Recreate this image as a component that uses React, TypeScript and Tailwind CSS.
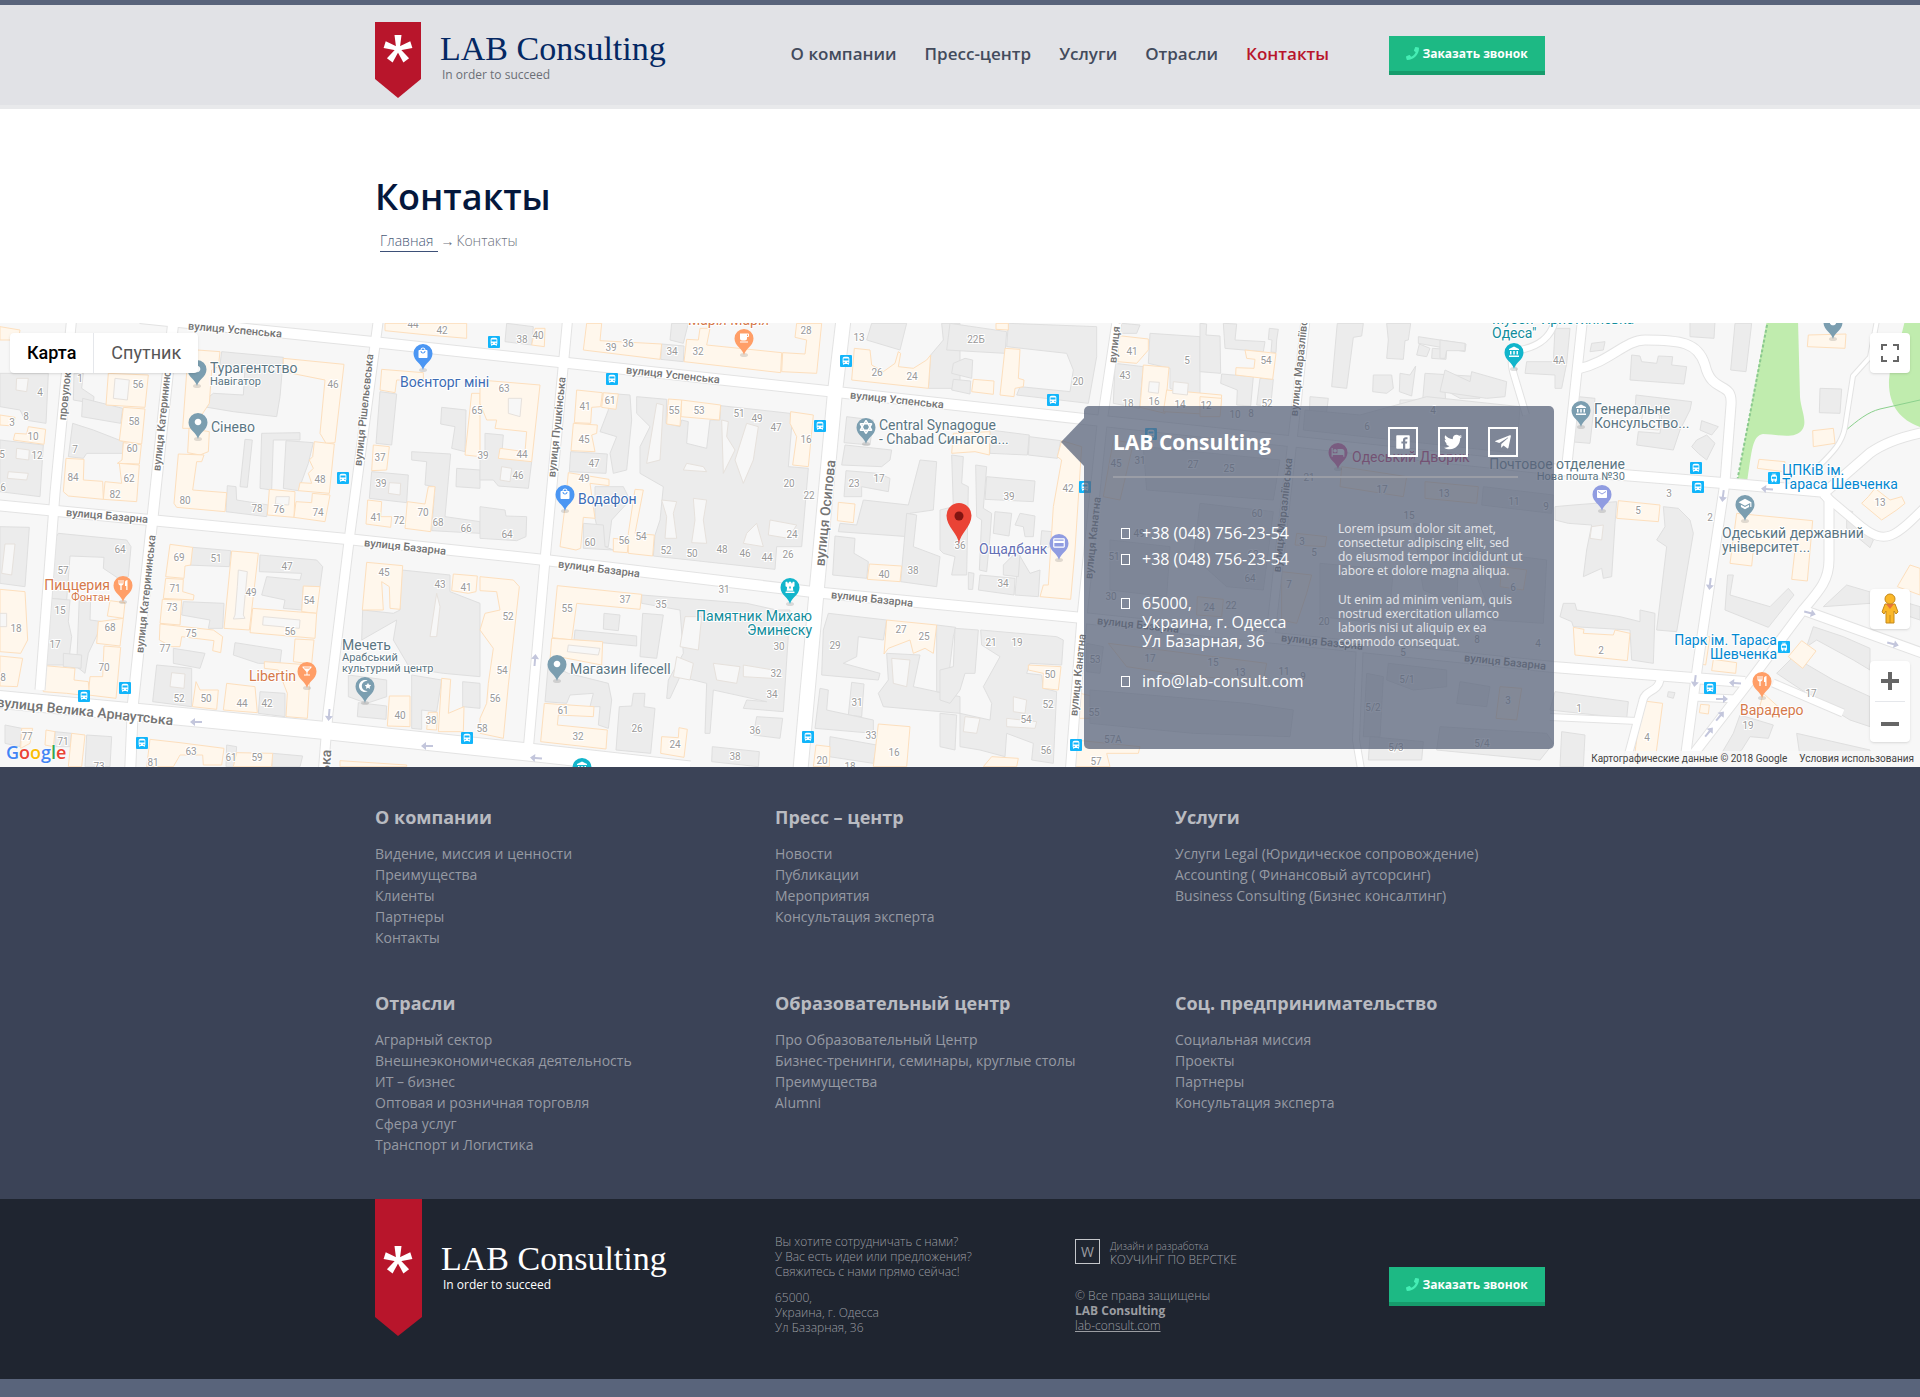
import { useState, type ReactNode } from "react";
import type { IconType } from "react-icons";
import {
  FaChessRook,
  FaPhone,
  FaStarAndCrescent,
  FaStarOfDavid,
  FaTelegramPlane,
  FaTwitter,
} from "react-icons/fa";
import { IoLogoFacebook } from "react-icons/io";
import {
  MdAccountBalance,
  MdCircle,
  MdCreditCard,
  MdDirectionsBus,
  MdEmail,
  MdHotel,
  MdLocalBar,
  MdLocalCafe,
  MdLocalMall,
  MdRestaurant,
  MdSchool,
  MdTram,
} from "react-icons/md";

const navLinks = ["О компании", "Пресс-центр", "Услуги", "Отрасли", "Контакты"];

const footerColumns = [
  {
    title: "О компании",
    links: ["Видение, миссия и ценности", "Преимущества", "Клиенты", "Партнеры", "Контакты"],
  },
  {
    title: "Пресс – центр",
    links: ["Новости", "Публикации", "Мероприятия", "Консультация эксперта"],
  },
  {
    title: "Услуги",
    links: [
      "Услуги Legal (Юридическое сопровождение)",
      "Accounting ( Финансовый аутсорсинг)",
      "Business Consulting (Бизнес консалтинг)",
    ],
  },
  {
    title: "Отрасли",
    links: [
      "Аграрный сектор",
      "Внешнеэкономическая деятельность",
      "ИТ – бизнес",
      "Оптовая и розничная торговля",
      "Сфера услуг",
      "Транспорт и Логистика",
    ],
  },
  {
    title: "Образовательный центр",
    links: [
      "Про Образовательный Центр",
      "Бизнес-тренинги, семинары, круглые столы",
      "Преимущества",
      "Alumni",
    ],
  },
  {
    title: "Соц. предпринимательство",
    links: ["Социальная миссия", "Проекты", "Партнеры", "Консультация эксперта"],
  },
];

// ---------- map data ----------

type Tile = {
  x: number;
  y: number;
  gray: string[];
  beige: string[];
  yards: string[];
  numbers: [number, number, string][];
};

// every tile is drawn three times larger than it is shown
const tiles: Tile[] = [
  {
    x: 0,
    y: 320,
    gray: [
      "0,160 145,160 138,310 75,300 60,270 0,260",
      "0,360 130,375 120,530 0,515",
      "222,160 250,160 245,205 282,230 280,250 220,240",
      "248,235 368,265 362,310 245,290",
      "218,310 280,330 370,365 368,400 260,400 250,415 205,410",
      "665,95 850,112 840,230 830,290 700,275 610,260 615,240 640,220 730,225 735,145 660,135",
      "735,358 757,360 742,502 720,500",
      "785,340 900,338 900,360 820,360 815,510 780,505",
      "858,362 940,368 925,430 895,512 850,505",
      "682,497 708,500 710,540 805,555 800,590 678,575",
      "1140,215 1190,222 1175,375 1128,370",
      "1115,455 1225,465 1220,548 1108,535",
      "1235,395 1352,402 1335,590 1440,605 1440,640 1295,632 1305,500 1275,495 1280,425 1235,420",
      "1325,262 1398,270 1395,395 1355,385 1365,320 1322,312",
      "1370,445 1440,450 1440,505 1368,500",
      "175,640 380,660 393,680 385,770 355,775 310,745 312,712 210,708 200,840 155,835 163,660",
      "150,835 210,840 205,905 215,950 205,1035 135,1035",
      "238,830 272,835 270,900 310,905 265,1000 255,1060 230,1040",
      "190,1000 245,1005 243,1045 190,1040",
      "0,620 88,622 75,800 0,790",
      "578,682 692,692 688,740 560,735",
      "780,705 950,720 968,740 960,800 910,800 905,870 850,865 855,840 785,825 800,770 900,780 905,760 778,755",
      "550,845 672,850 668,925 625,925 630,900 545,885",
      "705,968 845,990 840,1030 775,1030 700,1005",
      "470,1035 575,1045 575,1160 458,1145",
      "520,985 615,1000 600,1045 520,1030",
      "780,1115 855,1120 855,1190 775,1180",
      "1205,750 1350,765 1350,815 1440,850 1440,1070 1330,1060 1230,1045 1180,960 1190,900 1085,960 1088,870 1180,880 1200,870",
      "1045,1065 1160,1080 1160,1130 1100,1150 1045,1130",
      "1075,1148 1160,1158 1158,1198 1072,1190",
      "1235,1065 1325,1080 1310,1175 1265,1170 1265,1228 1235,1225",
      "1388,1085 1440,1090 1440,1165 1388,1160",
      "680,1275 710,1280 705,1340 678,1340",
      "818,1300 908,1308 900,1340 815,1340",
      "260,1245 335,1250 330,1340 255,1340",
      "15,1215 65,1225 60,1280 15,1270",
      "165,1235 215,1240 210,1280 165,1280",
    ],
    beige: [
      "0,20 60,30 55,60 0,60",
      "325,160 445,165 435,262 318,255",
      "370,262 435,267 425,372 358,362",
      "370,368 424,374 418,432 352,430 366,420",
      "358,430 418,435 410,545 310,538 315,485 365,490",
      "198,415 252,418 250,480 308,484 310,538 205,528 190,515",
      "85,320 137,328 132,373 40,360 45,340 80,342",
      "0,285 45,292 40,318 0,315",
      "565,88 660,95 655,140 635,150 628,250 605,285 600,325 548,325",
      "567,325 628,335 625,395 600,405 563,398",
      "535,402 612,405 605,425 590,425 578,510 680,518 675,575 530,562 522,550",
      "850,115 1032,133 1005,368 978,370 960,340 975,180 850,155",
      "943,365 1003,372 988,520 895,512 900,488 935,490 925,460 940,445 928,420 938,410",
      "808,508 885,515 882,592 802,585",
      "888,545 935,548 937,520 990,525 975,605 882,592",
      "1145,148 1270,158 1270,180 1190,180 1185,218 1140,210",
      "1120,375 1168,380 1160,450 1115,452",
      "1103,540 1145,545 1142,590 1175,590 1172,622 1098,612",
      "1222,545 1275,552 1285,500 1305,500 1292,635 1215,625",
      "1155,10 1400,10 1400,55 1283,45 1155,32",
      "1415,220 1440,220 1440,410 1395,405",
      "510,673 578,682 572,735 555,738 552,775 497,770",
      "497,775 550,778 548,815 582,825 580,840 490,835",
      "487,838 545,840 540,915 480,910",
      "480,912 640,930 668,950 662,998 638,992 642,962 545,950 540,980 515,980 478,960",
      "695,693 775,700 748,930 672,925",
      "910,798 960,800 950,880 905,875",
      "758,865 950,880 945,955 750,938",
      "885,957 942,960 935,1032 880,1025",
      "793,1025 932,1035 922,1195 858,1190 862,1120 835,1050 793,1045",
      "680,1090 765,1100 772,1178 670,1170",
      "588,1085 600,1110 655,1110 650,1168 577,1160",
      "1100,727 1208,737 1200,868 1170,865 1168,800 1145,785 1150,870 1087,870",
      "1360,762 1432,768 1428,815 1405,820 1355,812",
      "330,842 375,848 370,895 322,888",
      "295,905 370,895 360,978 290,970",
      "312,978 362,982 348,1135 265,1125 270,1070 308,1070",
      "135,1037 225,1045 222,1080 265,1085 268,1128 200,1120 130,1115 128,1085",
      "0,808 75,815 83,960 62,1000 0,995",
      "0,1008 68,1015 52,1100 0,1098",
      "1168,1128 1230,1128 1230,1220 1162,1218",
      "1285,1177 1312,1177 1310,1230 1280,1228",
      "1325,1075 1352,1078 1345,1180 1392,1160 1390,1235 1315,1235",
      "65,1225 98,1225 90,1270 62,1285",
      "138,1230 165,1235 160,1280 135,1275",
      "215,1240 255,1245 245,1340 205,1340",
      "450,1258 540,1268 672,1285 665,1335 610,1335 608,1305 540,1305 520,1340 440,1340",
      "710,1298 818,1300 815,1340 700,1340",
      "1020,1322 1220,1335 1220,1340 1020,1340",
    ],
    yards: [
      "345,175 388,180 382,240 340,235",
      "25,455 85,460 80,480 22,475",
      "50,385 88,390 86,420 48,415",
      "50,175 85,175 80,215 48,210",
      "828,530 868,530 866,555 826,552",
      "1168,488 1202,490 1200,525 1165,520",
      "15,672 45,672 35,765 5,760",
      "715,750 742,755 730,885 735,895 700,897 705,885 712,800",
      "790,890 900,900 898,925 788,915",
      "515,1058 555,1062 552,1105 510,1100",
      "1310,820 1320,860 1310,950 1290,950",
      "0,880 20,880 20,920 0,920",
    ],
    numbers: [
      [120, 215, "4"], [239, 175, "1"], [413, 191, "56"], [77, 288, "8"], [35, 306, "3"], [98, 348, "10"],
      [7, 402, "5"], [110, 405, "12"], [10, 501, "6"], [224, 387, "7"], [401, 303, "58"], [395, 385, "60"],
      [386, 474, "62"], [220, 471, "84"], [346, 522, "82"], [556, 540, "80"], [772, 564, "78"], [838, 567, "76"],
      [955, 576, "74"], [961, 477, "48"], [1000, 192, "46"], [1141, 411, "37"], [1144, 489, "39"], [1128, 592, "41"],
      [1198, 601, "72"], [1270, 576, "70"], [1315, 606, "68"], [1397, 624, "66"], [1432, 270, "65"], [1327, 31, "42"],
      [1240, 12, "44"], [359, 687, "64"], [190, 750, "57"], [180, 870, "15"], [47, 924, "18"], [164, 973, "17"],
      [331, 921, "68"], [313, 1041, "70"], [8, 1072, "8"], [538, 711, "69"], [648, 714, "51"], [862, 739, "47"],
      [525, 804, "71"], [752, 816, "49"], [926, 840, "54"], [515, 861, "73"], [572, 939, "75"], [869, 933, "56"],
      [496, 984, "77"], [538, 1134, "52"], [617, 1134, "50"], [725, 1149, "44"], [802, 1149, "42"], [1151, 757, "45"],
      [1319, 791, "43"], [1398, 800, "41"], [1201, 1185, "40"], [1294, 1200, "38"], [82, 1248, "77"], [188, 1263, "71"],
      [298, 1338, "73"], [459, 1326, "81"], [574, 1293, "63"], [693, 1311, "61"], [772, 1311, "59"],
    ],
  },
  {
    x: 480,
    y: 320,
    gray: [
      "80,10 160,20 155,75 75,65",
      "545,72 612,78 610,125 542,118",
      "575,10 625,10 610,70 570,60",
      "1175,10 1280,10 1260,90 1160,60",
      "1385,10 1440,10 1440,205 1345,205 1352,105 1390,60",
      "15,340 70,345 65,410 155,425 145,505 55,498 40,480 0,480 0,410 15,400",
      "0,560 75,570 78,588 140,590 138,650 110,662 0,655",
      "272,395 382,402 378,460 268,455",
      "385,220 450,225 455,300 440,450 400,460 390,400 410,350 360,335 385,270",
      "345,500 430,500 450,540 395,600 385,680 365,680 345,595",
      "470,230 560,238 558,310 600,320 605,300 625,305 620,370 680,385 690,300 720,300 722,257 930,280 935,320 925,440 985,445 965,680 890,680 885,748 520,708 525,645 540,600 550,500 480,460 480,380 510,320 470,280",
      "310,610 370,615 375,680 400,690 310,685",
      "372,880 420,885 415,932 370,927",
      "285,930 470,948 470,978 282,960",
      "488,880 550,885 530,1015 480,1010",
      "485,825 800,850 890,870 930,870 910,1175 790,1165 800,1140 860,1145 700,1110 690,1240 675,1240 680,1090 600,1070 570,1135 560,1135 565,1080 610,1000 600,870 485,850",
      "830,1190 908,1195 900,1255 820,1245",
      "697,1280 838,1295 835,1340 695,1325",
      "460,1120 495,1120 492,1160 525,1165 512,1300 408,1290 418,1160 455,1158",
      "205,1030 265,1060 385,1090 395,1140 385,1225 355,1215 360,1160 330,1160 340,1120 270,1125 260,1150 195,1145",
      "1100,290 1180,300 1170,375 1092,368",
      "1095,375 1235,390 1230,420 1205,440 1085,435",
      "1098,452 1195,460 1230,475 1225,515 1145,500 1145,530 1092,530",
      "1150,540 1285,555 1320,420 1370,425 1360,570 1290,580 1285,650 1075,635 1080,610 1130,615",
      "1280,580 1310,585 1300,680 1380,710 1370,800 1262,785",
      "1065,648 1125,655 1122,700 1165,725 1160,775 1058,765",
      "1045,880 1220,900 1210,960 1135,950 1130,1010 1090,1030 1200,1060 1195,1080 1025,1065 1030,930",
      "1115,1087 1152,1092 1145,1190 1105,1185",
      "1220,1000 1320,1005 1300,1100 1440,1130 1440,1180 1210,1160 1195,1120 1225,1080",
      "1020,1105 1045,1110 1040,1170 1180,1200 1180,1240 1005,1225",
      "1050,1250 1190,1275 1180,1330 1048,1310",
      "1370,915 1427,922 1420,950 1400,1120 1370,1115",
    ],
    beige: [
      "320,10 365,10 360,62 545,72 540,118 310,90",
      "620,58 655,60 660,25 690,25 680,75 905,98 902,158 612,125",
      "950,10 1025,10 1010,160 905,155 908,98 975,102 980,60 945,52",
      "165,25 195,25 193,80 155,75",
      "1123,85 1170,90 1175,135 1210,155 1245,130 1255,95 1262,100 1255,140 1300,145 1340,120 1352,105 1345,205 1115,180",
      "0,180 180,195 155,425 55,415 60,385 135,395 140,335 45,325 50,300 20,300 0,250",
      "290,210 367,218 362,260 335,262 332,310 283,308",
      "370,218 415,222 408,268 365,262",
      "280,310 352,315 350,340 335,345 345,395 273,392",
      "265,458 387,478 387,497 330,490 345,595 310,592 302,685 288,690 240,680 255,560",
      "565,237 605,240 600,318 560,312",
      "605,240 722,255 718,300 603,290",
      "932,275 1000,285 985,440 938,435 950,350 930,310",
      "465,508 490,510 465,640 523,645 518,708 445,700 445,640",
      "400,655 445,660 442,698 400,695",
      "1075,547 1125,552 1120,608 1072,602",
      "1168,732 1265,738 1260,785 1162,778",
      "1220,900 1370,915 1360,1000 1335,985 1300,1000 1290,960 1225,985 1212,1002",
      "1195,1212 1290,1220 1280,1340 1180,1340",
      "1008,1275 1050,1280 1048,1340 1000,1340",
      "0,770 100,780 118,800 85,1095 70,1255 0,1240 0,1195 20,1150 25,1090 40,985 0,930 15,880 60,870 50,815 0,812",
      "232,797 485,823 480,868 290,850 275,960 217,953",
      "215,955 368,965 365,1035 235,1010 210,1020",
      "193,1150 342,1160 340,1190 235,1185 232,1215 382,1230 378,1287 182,1265",
      "597,1223 622,1228 612,1312 542,1300 545,1250 595,1253",
    ],
    yards: [
      "85,235 125,235 120,290 85,280",
      "65,440 95,445 90,485 60,480",
      "620,430 670,440 680,455 610,450",
      "545,540 590,545 580,580 590,655 555,655 560,590",
      "640,535 680,540 670,600 680,670 635,668 645,600",
      "725,300 745,305 740,350 765,390 730,460",
      "800,310 835,320 820,420 790,490 765,420",
      "800,640 830,610 850,680 790,670",
      "870,600 950,615 925,655 865,645",
      "530,250 550,255 540,420 500,430",
      "615,890 665,890 655,990 600,980",
      "590,1010 640,1030 630,1080 580,1070",
      "790,1035 880,1050 875,1075 790,1070",
      "700,1030 780,1040 770,1090 710,1080",
      "265,975 360,985 355,1005 262,995",
      "1235,1015 1290,1020 1280,1100 1240,1090",
    ],
    numbers: [
      [127, 56, "38"], [175, 45, "40"], [394, 81, "39"], [445, 69, "36"], [577, 94, "34"], [655, 94, "32"],
      [978, 31, "28"], [1136, 52, "13"], [1192, 157, "26"], [1297, 168, "24"], [73, 204, "63"], [127, 403, "44"],
      [115, 465, "46"], [10, 406, "39"], [80, 642, "64"], [315, 259, "41"], [390, 240, "61"], [313, 357, "45"],
      [343, 430, "47"], [313, 474, "49"], [581, 270, "55"], [658, 270, "53"], [777, 279, "51"], [832, 294, "49"],
      [889, 321, "47"], [977, 357, "16"], [928, 489, "20"], [988, 525, "22"], [937, 643, "24"], [925, 703, "26"],
      [331, 666, "60"], [433, 660, "56"], [484, 649, "54"], [559, 690, "52"], [637, 699, "50"], [727, 687, "48"],
      [796, 699, "46"], [862, 711, "44"], [732, 808, "31"], [83, 888, "52"], [260, 864, "55"], [436, 837, "37"],
      [544, 852, "35"], [898, 978, "30"], [889, 1060, "32"], [877, 1123, "34"], [826, 1231, "36"], [766, 1308, "38"],
      [67, 1050, "54"], [46, 1134, "56"], [7, 1224, "58"], [249, 1170, "61"], [295, 1248, "32"], [472, 1224, "26"],
      [586, 1273, "24"], [1123, 490, "23"], [1198, 475, "17"], [1213, 763, "40"], [1299, 751, "38"], [1066, 976, "29"],
      [1264, 928, "27"], [1333, 948, "25"], [1131, 1147, "31"], [1173, 1245, "33"], [1243, 1297, "16"], [1027, 1320, "20"],
      [1111, 1338, "18"],
    ],
  },
  {
    x: 940,
    y: 320,
    gray: [
      "30,10 200,35 195,100 20,90",
      "205,10 470,20 470,110 445,250 230,225 240,200 390,215 400,150 380,100 200,80",
      "40,130 75,115 98,120 95,175 35,160",
      "40,178 92,183 90,222 35,210",
      "150,330 268,345 262,405 150,400",
      "268,350 362,362 352,415 265,405",
      "35,405 70,410 65,490 85,500 80,765 35,765 45,710 10,700 0,690 0,570 40,560",
      "140,470 285,483 280,545 135,538",
      "107,435 140,440 130,565 155,580 150,650 140,755 118,750 125,600 110,590",
      "165,575 215,580 207,648 160,640",
      "240,580 285,588 280,650 255,650 250,620 225,615",
      "120,765 225,775 222,825 115,810",
      "235,700 270,760 300,750 295,830 225,825",
      "190,735 225,700 240,700 235,770 190,765",
      "305,632 335,635 330,680 300,690",
      "85,757 102,760 98,808 85,808",
      "45,925 115,930 105,1060 75,1060 60,1110 30,1150 0,1140 0,1050 40,1040",
      "122,930 350,950 370,960 365,1035 270,1030 260,1060 305,1065 310,1105 350,1115 340,1330 275,1320 280,1270 200,1240 195,1310 120,1290 60,1280 60,1180 150,1200 155,1150 130,1100 180,1010 125,975",
      "0,1180 50,1185 45,1290 0,1280",
      "525,130 610,140 598,265 520,250",
      "630,40 780,50 780,240 690,205 690,145 625,130",
      "545,10 600,15 590,40 540,40",
    ],
    beige: [
      "168,10 205,10 205,30 168,28",
      "195,85 240,88 235,175 252,180 250,200 225,205 222,230 180,225",
      "100,178 162,183 160,223 95,215",
      "537,47 625,57 625,90 590,130 533,125",
      "610,135 687,142 675,280 600,262",
      "680,210 845,225 840,285 670,275",
      "40,340 150,335 148,405 105,395 35,400",
      "365,362 425,380 405,690 392,838 300,830 310,795 325,795 340,560 365,420 352,410",
      "265,1035 363,1040 355,1110 308,1105 310,1060 265,1050",
      "420,1120 485,1135 475,1195 418,1195",
      "155,1310 235,1315 230,1340 130,1340",
      "405,1260 600,1280 595,1300 500,1300 510,1340 405,1340",
    ],
    yards: [
      "628,185 658,187 655,220 625,216",
      "700,185 745,190 742,225 698,220",
      "220,1130 260,1140 255,1180 220,1175",
      "75,1190 120,1195 110,1240 70,1235",
      "200,1195 290,1205 285,1225 200,1220",
    ],
    numbers: [
      [109, 58, "22Б"], [415, 184, "20"], [575, 94, "41"], [556, 165, "43"], [740, 121, "5"], [563, 250, "18"],
      [641, 243, "16"], [719, 252, "14"], [797, 255, "12"], [385, 504, "42"], [208, 528, "39"], [61, 676, "36"],
      [190, 789, "34"], [153, 967, "21"], [232, 967, "19"], [331, 1062, "50"], [325, 1152, "52"], [259, 1197, "54"],
      [319, 1290, "56"], [469, 1323, "57"],
    ],
  },
  {
    x: 1200,
    y: 320,
    gray: [
      "0,10 20,12 18,45 60,48 62,160 0,155",
      "70,10 110,12 105,60 195,65 190,95 75,85",
      "208,25 235,28 230,60 228,98 213,96 216,60 205,58",
      "65,162 160,170 152,258 110,255 112,210 62,190",
      "180,175 220,178 212,258 170,255",
      "412,10 490,10 485,48 460,52 440,205 395,200 410,30",
      "560,10 632,10 625,60 615,62 610,118 560,115 565,60",
      "655,50 798,72 795,95 655,70",
      "658,72 690,85 680,110 650,105",
      "697,85 740,88 738,118 695,115",
      "520,165 575,165 580,205 560,220 518,215",
      "600,160 630,165 647,138 635,228 598,215",
      "675,160 840,170 840,235 780,235 735,210 740,300 600,300 600,240 668,240",
      "330,230 385,235 378,290 328,290",
    ],
    beige: ["135,90 228,100 218,178 107,165 108,143 162,145 165,118 140,115", "0,230 65,235 60,290 0,290"],
    yards: [],
    numbers: [
      [197, 121, "54"],
      [200, 249, "52"],
    ],
  },
  {
    x: 1060,
    y: 390,
    gray: [
      "250,170 660,210 640,330 260,300",
      "150,450 330,470 320,620 150,600",
      "420,340 640,365 610,600 500,590 400,500",
      "1270,290 1480,315 1475,370 1265,345",
      "735,60 900,75 1100,20 1380,50 1370,190 730,120",
      "780,520 1000,540 990,650 960,700 780,680",
      "1060,400 1200,420 1190,640 1090,600",
      "1220,480 1460,510 1450,700 1300,690",
      "80,760 130,770 120,850 80,845",
      "90,900 560,940 700,960 690,1040 400,1030 90,1000",
      "1200,875 1290,890 1280,950 1190,940",
      "985,820 1160,840 1160,890 1060,900 980,870",
      "920,850 970,860 960,1040 910,1040",
      "1140,1010 1460,1030 1480,1060 1440,1110 1130,1080",
      "930,1040 1090,1055 1085,1110 925,1110",
    ],
    beige: [
      "160,150 220,160 180,330 130,320",
      "845,230 1040,260 1030,320 840,290",
      "1095,275 1255,290 1250,340 1095,325",
      "665,545 755,555 740,610 710,700 665,690",
      "710,430 800,440 795,470 705,465",
      "1325,530 1400,540 1390,600 1320,590",
      "412,620 490,628 485,680 410,675",
      "145,760 620,820 610,870 400,860 200,830",
      "1320,890 1385,895 1370,990 1308,985",
    ],
    yards: [],
    numbers: [
      [524, 72, "10"], [572, 70, "8"], [1119, 60, "4"], [920, 109, "6"], [167, 220, "45"],
      [240, 211, "31"], [400, 222, "27"], [506, 235, "25"], [747, 262, "21"], [965, 297, "17"], [1151, 310, "13"],
      [1363, 334, "11"], [1457, 348, "9"], [590, 370, "60"], [1046, 376, "15"], [237, 430, "49"], [578, 492, "62"],
      [725, 453, "3"], [761, 487, "5"], [162, 498, "51"], [569, 565, "64"], [688, 582, "7"], [1358, 592, "6"],
      [152, 619, "30"], [446, 652, "24"], [514, 646, "22"], [793, 694, "20"], [1250, 748, "8"], [1434, 760, "4"],
      [1028, 787, "5"], [104, 807, "53"], [271, 805, "17"], [458, 816, "15"], [541, 847, "13"], [673, 844, "11"],
      [728, 858, "9"], [1042, 867, "5/1"], [1343, 931, "3"], [940, 952, "5/2"], [101, 966, "55"], [158, 1048, "57А"],
      [1007, 1072, "5/3"], [1265, 1060, "5/4"],
    ],
  },
  {
    x: 1440,
    y: 320,
    gray: [
      "0,60 75,70 75,92 20,92 15,115 0,115",
      "95,155 200,185 195,230 140,235 0,215 15,150 90,185",
      "345,25 390,25 380,130 365,205 345,205 345,165 255,160 260,125 340,125",
      "575,105 600,108 605,125 650,130 655,108 698,110 695,135 740,140 732,192 570,180",
      "885,10 935,10 918,155 872,150",
      "588,225 755,245 750,270 720,330 700,390 590,375 595,335 660,340 665,285 585,275",
      "785,302 835,320 815,345 780,330",
      "800,345 825,370 800,420 775,400 755,380 770,360",
      "1140,205 1205,207 1200,280 1138,278",
      "395,228 465,235 450,370 390,365",
      "400,555 530,545 525,610 515,770 490,775 485,745 430,770 440,690 455,615 385,610 345,600 345,560",
      "670,560 715,565 750,600 760,640 710,935 650,930 680,680 650,660 675,620",
      "370,850 405,850 410,870 540,890 600,905 600,870 645,880 640,1030 575,1020 570,930 400,920 395,905 360,890",
      "863,765 880,765 870,825 990,860 1045,805 1062,825 985,922 855,870",
      "345,1115 565,1145 560,1195 330,1170",
      "750,5 825,5 822,55 750,50",
      "455,70 495,65 490,90 450,95",
      "1120,920 1210,950 1290,985 1290,1050 1240,1020 1130,960 1100,980",
      "1220,795 1440,860 1440,900 1290,850 1150,860",
      "1010,1060 1060,1010 1180,1080 1290,1130 1290,1220 1230,1200 1100,1120",
      "900,1185 1000,1215 985,1255 930,1250 905,1290 850,1330 830,1325 880,1240",
      "1220,570 1238,575 1235,605 1300,660 1290,683 1220,625",
      "365,1235 435,1245 430,1340 360,1340",
      "685,1115 705,1118 700,1135 682,1130",
      "1070,1240 1290,1290 1290,1310 1080,1310",
    ],
    beige: [
      "1105,45 1218,42 1215,85 1102,80",
      "1118,332 1180,325 1185,370 1120,380",
      "957,418 1035,425 1032,455 952,445",
      "535,542 660,555 655,605 530,595",
      "1305,505 1350,540 1385,530 1395,550 1370,570 1325,600 1265,550 1285,530",
      "890,580 1118,602 1102,783 1055,778 1065,690 940,690 935,738 870,730",
      "400,922 432,928 430,940 520,945 525,930 570,940 562,1022 405,1005",
      "1085,962 1128,993 1088,1045 1045,1010",
      "820,1018 890,1028 887,1060 815,1052",
      "790,950 810,950 797,1035 785,1032",
      "605,1142 668,1150 645,1325 582,1320",
      "782,1153 808,1155 805,1182 778,1178",
      "970,1120 1020,1165 1010,1190 955,1175",
      "1410,735 1440,745 1440,825 1372,800",
    ],
    yards: ["455,620 490,615 485,660 450,655", "610,270 660,285 655,330 600,325"],
    numbers: [
      [357, 121, "4А"], [686, 520, "3"], [594, 571, "5"], [809, 592, "2"], [1319, 547, "13"], [482, 991, "2"],
      [416, 1164, "1"], [621, 1251, "4"], [1112, 1120, "17"], [923, 1216, "19"],
    ],
  },
];

const roads: [string, number][] = [
  ["M72,315 L55,493 L40,690", 9],
  ["M174,315 L153,513 L133,703 L130,775", 10],
  ["M379,315 L350,533 L328,713 L323,775", 9],
  ["M568,315 L545,560 L528,752", 9],
  ["M844,315 L835,392 L817,587 L800,775", 14],
  ["M1118,315 L1103,415 L1082,617 L1070,775", 9],
  ["M1306,315 L1297,400 L1270,640", 8],
  ["M1583,315 L1566,473", 9],
  ["M1578,369 C1610,362 1625,340 1645,340 C1680,340 1698,342 1705,365 C1712,395 1733,380 1731,405 L1725,482 L1698,663 L1683,775", 9],
  ["M1823,492 L1829,500 L1829,560 C1829,580 1820,590 1803,610 L1753,677 L1685,765", 9],
  ["M1823,494 L1870,453 C1885,442 1905,436 1925,432", 9],
  ["M1823,494 L1862,527 C1885,545 1895,538 1925,507", 8],
  ["M1803,610 L1925,654", 9],
  ["M1693,697 L1736,699", 7],
  ["M1773,683 L1843,713", 7],
  ["M1556,315 C1553,340 1535,347 1520,350 C1508,354 1512,368 1514,375 L1526,415", 6],
  ["M1660,680 C1658,692 1645,690 1643,700 L1623,775", 7],
  ["M1550,717 L1637,721", 6],
  ["M1878,315 L1870,357 L1853,376 L1845,427 C1842,445 1830,455 1813,472", 4],
  ["M1360,640 L1356,740 L1362,775", 6],
  ["M140,318 L373,342 L827,391 L1084,419 L1560,470 L1723,483 L1826,492", 10],
  ["M-5,505 L150,520 L347,539 L545,560 L813,592 L1083,618 L1553,667 L1693,678 L1745,682", 10],
  ["M-5,699 L187,717 L320,730 L528,752 L690,770", 17],
];

const streets: [string, number, number, number, number][] = [
  ["вулиця Успенська", 235, 330, 5, 11],
  ["вулиця Успенська", 673, 375, 6, 11],
  ["вулиця Успенська", 897, 400, 6, 11],
  ["вулиця Базарна", 107, 516, 5, 11],
  ["вулиця Базарна", 405, 547, 6, 11],
  ["вулиця Базарна", 599, 569, 7, 11],
  ["вулиця Базарна", 872, 599, 6, 11],
  ["вулиця Базарна", 1138, 625, 6, 11],
  ["вулиця Базарна", 1322, 642, 6, 11],
  ["вулиця Базарна", 1505, 662, 6, 11],
  ["вулиця Велика Арнаутська", 85, 711, 6, 14],
  ["провулок", 65, 396, -84, 11],
  ["вулиця Катерининська", 163, 412, -84, 11],
  ["вулиця Катерининська", 146, 594, -84, 11],
  ["вулиця Рішельєвська", 364, 410, -84, 11],
  ["вулиця Пушкінська", 557, 427, -84, 11],
  ["вулиця Осипова", 825, 513, -84, 14],
  ["вулиця Канатна", 1093, 538, -84, 11],
  ["вулиця Канатна", 1078, 675, -84, 11],
  ["вулиця Канатна", 1117, 322, -84, 11],
  ["вулиця Маразліївська", 1300, 359, -84, 11],
  ["вулиця Маразліївська", 1283, 515, -84, 11],
  ["Рішельєвська", 323, 796, -86, 14],
];

const slate = "#7b9eb0";
const slateText = "#5b7683";
const orange = "#ff9e67";
const orangeText = "#d5794b";
const blue = "#4b96f3";
const blueText = "#3d6cb4";
const teal = "#12b5cb";
const tealText = "#118d9c";
const indigo = "#909ce1";
const transit = "#0288d1";

type Place = {
  text: string;
  x: number;
  y: number;
  color: string;
  size?: number;
  end?: boolean;
};

const places: Place[] = [
  { text: "Турагентство", x: 210, y: 373, color: slateText },
  { text: "Навігатор", x: 210, y: 385, color: slateText, size: 11 },
  { text: "Сінево", x: 211, y: 432, color: slateText },
  { text: "Воєнторг міні", x: 400, y: 387, color: blueText },
  { text: "Водафон", x: 578, y: 504, color: blueText },
  { text: "Магазин lifecell", x: 570, y: 674, color: slateText },
  { text: "Пиццерия", x: 110, y: 590, color: orangeText, end: true },
  { text: "Фонтан", x: 110, y: 601, color: orangeText, size: 11, end: true },
  { text: "Libertin", x: 249, y: 681, color: orangeText },
  { text: "Мечеть", x: 342, y: 650, color: slateText },
  { text: "Арабський", x: 342, y: 661, color: slateText, size: 11 },
  { text: "культурний центр", x: 342, y: 672, color: slateText, size: 11 },
  { text: "Марія Марія", x: 688, y: 325, color: orangeText },
  { text: "Памятник Михаю", x: 812, y: 621, color: tealText, end: true },
  { text: "Эминеску", x: 812, y: 635, color: tealText, end: true },
  { text: "Central Synagogue", x: 879, y: 430, color: slateText },
  { text: "- Chabad Синагога...", x: 879, y: 444, color: slateText },
  { text: "Ощадбанк", x: 979, y: 554, color: "#6470b5" },
  { text: "Одеський Дворик", x: 1352, y: 462, color: "#c2185b" },
  { text: "Почтовое отделение", x: 1625, y: 469, color: slateText, end: true },
  { text: "Нова пошта №30", x: 1625, y: 480, color: slateText, size: 11, end: true },
  { text: 'Музей "Християнська', x: 1492, y: 324, color: tealText },
  { text: 'Одеса"', x: 1492, y: 338, color: tealText },
  { text: "Генеральне", x: 1594, y: 414, color: slateText },
  { text: "Консульство...", x: 1594, y: 428, color: slateText },
  { text: "Одеський державний", x: 1722, y: 538, color: slateText },
  { text: "університет...", x: 1722, y: 552, color: slateText },
  { text: "ЦПКіВ ім.", x: 1782, y: 475, color: transit },
  { text: "Тараса Шевченка", x: 1782, y: 489, color: transit },
  { text: "Парк ім. Тараса", x: 1777, y: 645, color: transit, end: true },
  { text: "Шевченка", x: 1777, y: 659, color: transit, end: true },
  { text: "Варадеро", x: 1740, y: 715, color: orangeText },
];

// x, y of the tip, pin colour, icon, icon size
const pins: [number, number, string, IconType, number][] = [
  [197, 386, slate, MdCircle, 8],
  [198, 439, slate, MdCircle, 8],
  [423, 370, blue, MdLocalMall, 12],
  [565, 511, blue, MdLocalMall, 12],
  [557, 681, slate, MdCircle, 8],
  [123, 602, orange, MdRestaurant, 12],
  [307, 688, orange, MdLocalBar, 12],
  [365, 703, slate, FaStarAndCrescent, 12],
  [744, 355, orange, MdLocalCafe, 12],
  [790, 604, teal, FaChessRook, 12],
  [866, 444, slate, FaStarOfDavid, 14],
  [1059, 560, indigo, MdCreditCard, 14],
  [1338, 469, "#d8448f", MdHotel, 14],
  [1514, 369, teal, MdAccountBalance, 12],
  [1581, 427, slate, MdAccountBalance, 12],
  [1602, 511, indigo, MdEmail, 12],
  [1745, 521, slate, MdSchool, 14],
  [1762, 698, orange, MdRestaurant, 12],
  [1833, 339, slate, MdCircle, 8],
  [582, 784, teal, MdAccountBalance, 12],
];

const busStops = [
  [84, 696], [125, 688], [142, 743], [343, 478], [467, 738], [494, 342], [612, 379], [846, 361], [820, 426],
  [808, 737], [1053, 400], [1085, 487], [1076, 745], [1151, 434], [1696, 468], [1698, 487], [1710, 688],
];

const tramStops = [
  [1774, 478],
  [1784, 647],
];

const arrows = [
  [196, 722, 180], [427, 746, 180], [329, 715, 95], [535, 660, -85], [536, 758, 185], [1767, 489, 185],
  [1723, 496, 97], [1710, 584, 97], [1695, 681, 97], [1735, 683, 185], [1722, 699, 0], [1720, 716, -50],
  [1709, 732, -50], [1810, 613, 15], [1893, 644, 15],
];

function Stop({ x, y, Icon }: { x: number; y: number; Icon: IconType }) {
  return (
    <g transform={`translate(${x - 6} ${y - 6})`}>
      <rect width="12" height="12" rx="1" fill="#12b5fa" />
      <Icon x="1" y="1" size={10} color="#ffffff" />
    </g>
  );
}

function CityMap() {
  return (
    <svg
      viewBox="0 323 1920 444"
      preserveAspectRatio="xMidYMid slice"
      className="block h-full w-full bg-[#f7f7f7] font-['Roboto',sans-serif]"
      role="img"
      aria-label="Карта Одессы"
    >
      {/* parks */}
      <path
        d="M1767,320 H1798 L1800,397 C1801,410 1808,422 1802,430 C1795,440 1775,434 1763,434 C1752,436 1752,450 1747,482 H1737 Z"
        fill="#c0ecae"
      />
      <path d="M1905,320 H1920 V427 C1900,420 1888,405 1889,380 C1890,362 1900,345 1905,320 Z" fill="#c0ecae" />
      <path d="M1768,320 L1737,482" stroke="#8bc98f" strokeWidth="2" strokeDasharray="3 2" />
      <path d="M1845,431 C1858,420 1868,412 1880,409 L1920,400" fill="none" stroke="#8bd08d" strokeWidth="1" />

      {/* buildings */}
      {tiles.map((tile) => (
        <g key={tile.x} transform={`translate(${tile.x} ${tile.y}) scale(${1 / 3})`} strokeWidth="3">
          {tile.gray.map((points) => (
            <polygon key={points} points={points} fill="#ececec" stroke="#dfdfdf" />
          ))}
          {tile.beige.map((points) => (
            <polygon key={points} points={points} fill="#fff7ec" stroke="#fddfbd" />
          ))}
          {tile.yards.map((points) => (
            <polygon key={points} points={points} fill="#f7f7f7" stroke="#e6e1dc" />
          ))}
        </g>
      ))}

      {/* roads */}
      <g fill="none" strokeLinejoin="round">
        {roads.map(([d, width]) => (
          <path key={d} d={d} stroke="#e3e3e3" strokeWidth={width + 2} />
        ))}
        {roads.map(([d, width]) => (
          <path key={d} d={d} stroke="#ffffff" strokeWidth={width} />
        ))}
      </g>

      {arrows.map(([x, y, angle]) => (
        <path
          key={`${x}-${y}`}
          d="M-6,-1 H1 V-4 L6,0 L1,4 V1 H-6 Z"
          fill="#c3c6dc"
          transform={`translate(${x} ${y}) rotate(${angle})`}
        />
      ))}

      {/* house numbers */}
      <g fontSize="10" fill="#999999" textAnchor="middle">
        {tiles.map((tile) =>
          tile.numbers.map(([x, y, label]) => (
            <text
              key={`${tile.x}-${x}-${y}`}
              x={Math.round(tile.x + x / 3)}
              y={Math.round(tile.y + y / 3) + 4}
              stroke="#ffffff"
              strokeWidth="2"
              paintOrder="stroke"
            >
              {label}
            </text>
          )),
        )}
      </g>

      {/* street names */}
      <g fill="#747474" fontWeight="500" textAnchor="middle" stroke="#ffffff" strokeWidth="2" paintOrder="stroke">
        {streets.map(([label, x, y, angle, size]) => (
          <text
            key={`${x}-${y}`}
            fontSize={size}
            dominantBaseline="central"
            transform={`translate(${x} ${y}) rotate(${angle})`}
          >
            {label}
          </text>
        ))}
      </g>

      {/* transit stops */}
      {busStops.map(([x, y]) => (
        <Stop key={`${x}-${y}`} x={x} y={y} Icon={MdDirectionsBus} />
      ))}
      {tramStops.map(([x, y]) => (
        <Stop key={`${x}-${y}`} x={x} y={y} Icon={MdTram} />
      ))}

      {/* places */}
      {pins.map(([x, y, color, Icon, size]) => (
        <g key={`${x}-${y}`} transform={`translate(${x} ${y})`}>
          <ellipse rx="4" ry="2" fill="#000000" opacity="0.12" />
          <path
            d="M0,0 C-1,-6 -9.5,-9 -9.5,-16.5 a9.5,9.5 0 1 1 19,0 C9.5,-9 1,-6 0,0 Z"
            fill={color}
          />
          <Icon x={-size / 2} y={-17 - size / 2} size={size} color="#ffffff" />
        </g>
      ))}
      <g stroke="#ffffff" strokeWidth="2" strokeLinejoin="round" paintOrder="stroke">
        {places.map((place) => (
          <text
            key={`${place.text}-${place.y}`}
            x={place.x}
            y={place.y}
            fontSize={place.size ?? 14}
            fill={place.color}
            textAnchor={place.end ? "end" : "start"}
          >
            {place.text}
          </text>
        ))}
      </g>

      {/* office marker */}
      <g transform="translate(959 544)">
        <path
          d="M0,0 C-1,-11 -12.5,-17 -12.5,-28.5 a12.5,12.5 0 1 1 25,0 C12.5,-17 1,-11 0,0 Z"
          fill="#ea4335"
        />
        <circle cy="-28" r="4.5" fill="#811411" />
      </g>
    </svg>
  );
}

function MapControls() {
  const [mapType, setMapType] = useState("Карта");

  return (
    <div className="font-['Roboto',sans-serif]">
      <div className="absolute top-[10px] left-[10px] flex h-10 rounded-sm bg-white shadow">
        {["Карта", "Спутник"].map((type) => (
          <button
            key={type}
            type="button"
            onClick={() => setMapType(type)}
            className={
              mapType === type
                ? "border-r border-gray-200 px-[17px] text-lg font-medium text-black"
                : "px-[17px] text-lg text-[#565656]"
            }
          >
            {type}
          </button>
        ))}
      </div>

      <div className="absolute top-[10px] right-[10px] bottom-[25px] flex w-10 flex-col">
        <button
          type="button"
          aria-label="Полноэкранный режим"
          className="flex h-10 items-center justify-center rounded-sm bg-white shadow"
        >
          <svg width="18" height="18" fill="none" stroke="#666666" strokeWidth="2">
            <path d="M1,6 V1 H6 M12,1 H17 V6 M17,12 V17 H12 M6,17 H1 V12" />
          </svg>
        </button>
        <button
          type="button"
          aria-label="Просмотр улиц"
          className="mt-auto flex h-10 items-center justify-center rounded-sm bg-white shadow"
        >
          <svg width="20" height="32" viewBox="0 0 20 32">
            <path
              d="M5,11 H15 L18,19 L16,21 L14,18 V30 H6 V18 L4,21 L2,19 Z"
              fill="#fbb829"
              stroke="#c58a1c"
              strokeWidth="1"
            />
            <path d="M10,22 V30" stroke="#c58a1c" strokeWidth="1" />
            <path d="M6,11 H14 L10,16 Z" fill="#e8743b" />
            <circle cx="10" cy="6" r="5" fill="#fbb829" stroke="#c58a1c" strokeWidth="1" />
          </svg>
        </button>
        <div className="mt-8 flex flex-col rounded-sm bg-white shadow">
          <button type="button" aria-label="Увеличить" className="flex h-10 items-center justify-center">
            <svg width="18" height="18" stroke="#666666" strokeWidth="4">
              <path d="M9,0 V18 M0,9 H18" />
            </svg>
          </button>
          <span className="mx-[5px] h-px bg-gray-200" />
          <button type="button" aria-label="Уменьшить" className="flex h-10 items-center justify-center">
            <svg width="18" height="18" stroke="#666666" strokeWidth="4">
              <path d="M0,11 H18" />
            </svg>
          </button>
        </div>
      </div>

      <a
        href="#google"
        className="absolute bottom-[3px] left-[6px] font-['Open_Sans',sans-serif] text-lg leading-6 font-semibold [text-shadow:0_0_2px_#fff,0_0_2px_#fff]"
      >
        <span className="text-[#4285f4]">G</span>
        <span className="text-[#ea4335]">o</span>
        <span className="text-[#fbbc05]">o</span>
        <span className="text-[#4285f4]">g</span>
        <span className="text-[#34a853]">l</span>
        <span className="text-[#ea4335]">e</span>
      </a>
      <p className="absolute right-0 bottom-0 flex gap-3 bg-[#f7f7f7]/80 px-[6px] text-[10px] leading-4 text-[#444444]">
        <span>Картографические данные © 2018 Google</span>
        <a href="#terms">Условия использования</a>
      </p>
    </div>
  );
}

// ---------- page parts ----------

function Asterisk({ cx, cy }: { cx: number; cy: number }) {
  return (
    <g transform={`translate(${cx} ${cy})`} fill="#ffffff">
      {[0, 72, 144, 216, 288].map((angle) => (
        <path key={angle} d="M-1.5,2 L-3.5,-14 H3.5 L1.5,2 Z" transform={`rotate(${angle})`} />
      ))}
    </g>
  );
}

function LogoText({ className, tagline }: { className: string; tagline: string }) {
  return (
    <span className="flex flex-col pl-[19px]">
      <span className={`font-['Liberation_Serif',serif] text-[34px] leading-9 ${className}`}>LAB Consulting</span>
      <span className={`pl-[2px] text-xs leading-4 ${tagline}`}>In order to succeed</span>
    </span>
  );
}

function CallButton() {
  return (
    <button
      type="button"
      className="flex h-[39px] w-[156px] items-center justify-center gap-[3px] border-b-4 border-[#169c6c] bg-[#1db984] text-xs font-bold text-white"
    >
      <FaPhone className="h-[13px] w-[13px] text-[#46edb4]" />
      Заказать звонок
    </button>
  );
}

function ContactRow({ children }: { children: ReactNode }) {
  return (
    <li className="flex items-start gap-3">
      <span className="mt-1 h-[11px] w-[9px] shrink-0 border border-white" />
      <span>{children}</span>
    </li>
  );
}

function ContactCard() {
  const socials = [
    { name: "Facebook", Icon: IoLogoFacebook },
    { name: "Twitter", Icon: FaTwitter },
    { name: "Telegram", Icon: FaTelegramPlane },
  ];

  return (
    <div className="relative h-[343px] w-[470px] rounded-[5px] bg-[#59647b]/75 px-[29px] pt-[21px] text-white">
      <svg width="23" height="48" className="absolute top-3 right-full">
        <path d="M23,0 L0,24 L23,48 Z" fill="#59647b" fillOpacity="0.75" />
      </svg>
      <div className="mr-[7px] flex items-center justify-between border-b-2 border-[#9a9da6] pb-[19px]">
        <h2 className="text-[21px] leading-[30px] font-bold">LAB Consulting</h2>
        <div className="flex gap-5">
          {socials.map(({ name, Icon }) => (
            <a
              key={name}
              href={`#${name.toLowerCase()}`}
              aria-label={name}
              className="flex h-[30px] w-[30px] items-center justify-center border-2 border-white"
            >
              <Icon className="h-[18px] w-[18px]" />
            </a>
          ))}
        </div>
      </div>
      <div className="flex pt-11">
        <ul className="w-[225px] pt-[2px] pl-2 text-base leading-[19px]">
          <ContactRow>+38 (048) 756-23-54</ContactRow>
          <li className="h-[7px]" />
          <ContactRow>+38 (048) 756-23-54</ContactRow>
          <li className="h-[25px]" />
          <ContactRow>
            65000,
            <br />
            Украина, г. Одесса
            <br />
            Ул Базарная, 36
          </ContactRow>
          <li className="h-[21px]" />
          <ContactRow>
            <a href="mailto:info@lab-consult.com">info@lab-consult.com</a>
          </ContactRow>
        </ul>
        <div className="w-[187px] text-xs leading-[14px] text-white/80">
          <p>
            Lorem ipsum dolor sit amet,
            <br />
            consectetur adipiscing elit, sed
            <br />
            do eiusmod tempor incididunt ut
            <br />
            labore et dolore magna aliqua.
          </p>
          <p className="mt-[15px]">
            Ut enim ad minim veniam, quis
            <br />
            nostrud exercitation ullamco
            <br />
            laboris nisi ut aliquip ex ea
            <br />
            commodo consequat.
          </p>
        </div>
      </div>
    </div>
  );
}

export default function App() {
  return (
    <div className="border-t-[5px] border-b-[18px] border-[#59647b] bg-white font-['Open_Sans',sans-serif]">
      <header className="border-b-4 border-[#e8e9eb] bg-[#e1e2e6]">
        <div className="mx-auto flex h-[100px] max-w-[1170px] items-start">
          <a href="#home" className="flex pt-[17px]">
            <svg width="46" height="76">
              <path d="M0,0 H46 V57 L23,76 L0,57 Z" fill="#b8152b" />
              <Asterisk cx={23} cy={27} />
            </svg>
            <span className="pt-[9px]">
              <LogoText className="text-[#042863]" tagline="text-[#6b6f76]" />
            </span>
          </a>
          <nav className="mt-[37px] ml-auto flex gap-7 text-[17px] leading-6 font-semibold text-[#434b5c]">
            {navLinks.map((link) => (
              <a key={link} href="#" className={link === "Контакты" ? "text-[#b8152b]" : ""}>
                {link}
              </a>
            ))}
          </nav>
          <div className="mt-[31px] ml-[60px]">
            <CallButton />
          </div>
        </div>
      </header>

      <main>
        <div className="mx-auto h-[214px] max-w-[1170px] pt-[62px]">
          <h1 className="text-4xl leading-[52px] font-semibold text-[#04173c]">Контакты</h1>
          <p className="mt-2 flex pl-[5px] text-sm leading-5 font-light text-[#6f7480]">
            <a href="#home" className="border-b border-[#3d5078] pr-[5px] text-[#4a5a78]">
              Главная
            </a>
            <span className="px-[2px]">→</span>
            <span>Контакты</span>
          </p>
        </div>

        <section className="relative h-[444px] overflow-hidden">
          <CityMap />
          <div className="absolute inset-x-0 top-[83px] mx-auto flex max-w-[1188px] justify-end">
            <ContactCard />
          </div>
          <MapControls />
        </section>
      </main>

      <footer>
        <div className="bg-[#3b4357]">
          <div className="mx-auto grid h-[432px] max-w-[1200px] grid-cols-3 grid-rows-[186px_1fr] pt-[38px]">
            {footerColumns.map((column) => (
              <div key={column.title} className="px-[15px]">
                <h3 className="text-lg leading-6 font-bold text-[#b9bbc1]">{column.title}</h3>
                <ul className="mt-[14px] text-sm leading-[21px] text-[#969aa3]">
                  {column.links.map((link) => (
                    <li key={link}>
                      <a href="#">{link}</a>
                    </li>
                  ))}
                </ul>
              </div>
            ))}
          </div>
        </div>

        <div className="bg-[#1f2530]">
          <div className="mx-auto flex h-[180px] max-w-[1170px] items-start text-xs leading-[15px] font-light text-[#9b9da2]">
            <a href="#home" className="flex w-[400px] font-normal">
              <svg width="47" height="137">
                <path d="M0,0 H47 V118 L23,137 L0,118 Z" fill="#b8152b" />
                <Asterisk cx={23} cy={61} />
              </svg>
              <span className="pt-[42px]">
                <LogoText className="text-white" tagline="text-white" />
              </span>
            </a>
            <div className="w-[300px] pt-[35px]">
              <p>
                Вы хотите сотрудничать с нами?
                <br />
                У Вас есть идеи или предложения?
                <br />
                Свяжитесь с нами прямо сейчас!
              </p>
              <p className="mt-[11px]">
                65000,
                <br />
                Украина, г. Одесса
                <br />
                Ул Базарная, 36
              </p>
            </div>
            <div className="pt-[40px]">
              <div className="flex gap-[10px]">
                <span className="flex h-[25px] w-[25px] items-center justify-center border border-[#c5c7cb] text-sm font-normal">
                  W
                </span>
                <p className="leading-[13px]">
                  <span className="text-[10px]">Дизайн и разработка</span>
                  <br />
                  КОУЧИНГ ПО ВЕРСТКЕ
                </p>
              </div>
              <p className="mt-[22px]">
                © Все права защищены
                <br />
                <b className="font-bold">LAB Consulting</b>
                <br />
                <a href="#site" className="underline">
                  lab-consult.com
                </a>
              </p>
            </div>
            <div className="mt-[68px] ml-auto">
              <CallButton />
            </div>
          </div>
        </div>
      </footer>
    </div>
  );
}
